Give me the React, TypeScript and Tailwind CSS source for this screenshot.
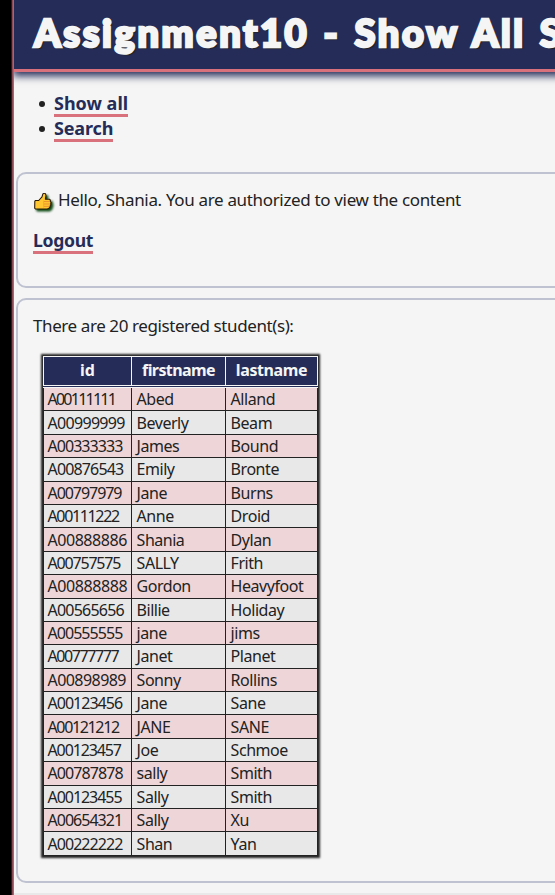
import type { ReactNode } from 'react';

type Student = [id: string, first: string, last: string];

const students: Student[] = [
  ['A00111111', 'Abed', 'Alland'],
  ['A00999999', 'Beverly', 'Beam'],
  ['A00333333', 'James', 'Bound'],
  ['A00876543', 'Emily', 'Bronte'],
  ['A00797979', 'Jane', 'Burns'],
  ['A00111222', 'Anne', 'Droid'],
  ['A00888886', 'Shania', 'Dylan'],
  ['A00757575', 'SALLY', 'Frith'],
  ['A00888888', 'Gordon', 'Heavyfoot'],
  ['A00565656', 'Billie', 'Holiday'],
  ['A00555555', 'jane', 'jims'],
  ['A00777777', 'Janet', 'Planet'],
  ['A00898989', 'Sonny', 'Rollins'],
  ['A00123456', 'Jane', 'Sane'],
  ['A00121212', 'JANE', 'SANE'],
  ['A00123457', 'Joe', 'Schmoe'],
  ['A00787878', 'sally', 'Smith'],
  ['A00123455', 'Sally', 'Smith'],
  ['A00654321', 'Sally', 'Xu'],
  ['A00222222', 'Shan', 'Yan'],
];

const narrowing: Record<string, number> = { '1': 2, '2': 0.8, '3': 0.8, '4': 0.4, '5': 0.8, '6': 0.3, '7': 1.5, '9': 0.4 };

function idTracking(id: string) {
  const total = id.split('').reduce((sum, ch) => sum + (narrowing[ch] ?? 0), 0);
  return `${(-0.42 - total / id.length).toFixed(3)}px`;
}

function NavLink({ children, className = '' }: { children: ReactNode; className?: string }) {
  return (
    <a href="#" className={`inline-block border-b-3 border-[#d9717d] font-bold text-[#252c58] ${className}`}>
      {children}
    </a>
  );
}

function NavItem({ children }: { children: ReactNode }) {
  return (
    <li className="flex h-[25px] items-start">
      <span className="mt-[10px] mr-[9px] ml-[-15px] size-[6px] rounded-full bg-[#222]" />
      {children}
    </li>
  );
}

function ThumbsUp() {
  return (
    <svg viewBox="0 0 18 19" className="h-[19px] w-[18px] shrink-0 drop-shadow-[2px_2px_1px_#0b4a12]">
      <path
        d="M.8 8.2 1.6 7.5h3.1l3.3-3.6.9-3 1-.8 1.5.7.6 1.6-.6 3.8h4l1 1-.2 1.3.9 1-.5 1.5.3 1-.9 1-.1 1.3-1 .8-1.4.9H1.4l-.7-.8Z"
        fill="#ffc832"
        stroke="#2b1a08"
        strokeWidth="1.1"
        strokeLinejoin="round"
      />
      <path d="M10 8.6h6M10 11h6.2M10 13.3h5.4" fill="none" stroke="#e8912d" strokeWidth="1" />
      <path d="M9.6 7.6v7" stroke="#f2a52c" strokeWidth="0.8" />
    </svg>
  );
}

export default function App() {
  return (
    <div className="flex h-[895px] w-[555px] overflow-hidden bg-black font-['Noto_Sans','Open_Sans',sans-serif] text-[#222]">
      <div className="w-[11px] shrink-0 bg-black" />
      <div className="w-px shrink-0 bg-[#32191f]" />
      <div className="w-px shrink-0 bg-[#8b4852]" />
      <div className="w-px shrink-0 bg-[#b7606b]" />
      <main className="flex w-[900px] shrink-0 flex-col overflow-hidden bg-[#f5f5f5]">
        <header className="h-[72px] shrink-0 border-b-3 border-[#d9717d] bg-[#252c58] pl-[20px] shadow-[0_3px_8px_1px_#252c58]">
          <h1 className="font-['Lato',sans-serif] text-[38px] leading-[65px] font-black tracking-[2.6px] whitespace-nowrap text-[#f5f5f5] [-webkit-text-stroke:2.6px_#f5f5f5] [text-shadow:2px_2px_1px_#222] [word-spacing:2.6px]">
            Assignment10 - Show All Students
          </h1>
        </header>

        <nav className="h-[100px] shrink-0 pt-[19px] pl-[40px]">
          <ul className="text-[18px] leading-[25px]">
            <NavItem><NavLink className="h-[26px]">Show all</NavLink></NavItem>
            <NavItem><NavLink className="h-[26px] tracking-[-0.15px]">Search</NavLink></NavItem>
          </ul>
        </nav>

        <section className="ml-[2px] h-[116px] shrink-0 rounded-[10px] border-2 border-[#bfc2d0] pt-[14px] pl-[15px]">
          <div className="flex h-[24px] items-center">
            <div className="mt-[5px] w-[25px] shrink-0 pl-px"><ThumbsUp /></div>
            <p className="text-[17px] tracking-[-0.34px]">Hello, Shania. You are authorized to view the content</p>
          </div>
          <div className="mt-[15px]">
            <NavLink className="h-[27px] text-[17.6px] leading-[26px] tracking-[-0.33px]">Logout</NavLink>
          </div>
        </section>

        <section className="mt-[10px] ml-[2px] h-[585px] shrink-0 rounded-[10px] border-2 border-[#bfc2d0] pt-[13px] pl-[15px]">
          <p className="text-[17px] leading-[25px] tracking-[-0.41px]">There are 20 registered student(s):</p>
          <table className="mt-[18px] ml-[10px] w-[275px] table-fixed border-separate border-spacing-0 text-[16px] leading-[20px] shadow-[0_0_2px_2px_#222]">
            <colgroup>
              <col className="w-[89px]" />
              <col className="w-[94px]" />
              <col className="w-[92px]" />
            </colgroup>
            <thead>
              <tr className="h-[30px] bg-[#252c58] text-[#f5f5f5]">
                <th className="border border-[#f5f5f5] p-0 pb-[2px]">id</th>
                <th className="border-y border-r border-[#f5f5f5] p-0 pb-[2px] tracking-[-0.6px]">firstname</th>
                <th className="border-y border-r border-[#f5f5f5] p-0 pb-[2px] tracking-[-0.4px]">lastname</th>
              </tr>
              <tr className="h-[2px] bg-[#252c58] leading-[0]">
                <td colSpan={3} className="border-b border-[#f5f5f5] p-0" />
              </tr>
            </thead>
            <tbody>
              {students.map(([id, first, last]) => (
                <tr key={id} className="h-[23.4px] odd:bg-[#eed5d7] even:bg-[#e8e8e8]">
                  <td className="border-x border-b border-[#222] p-0 pl-[3.5px]" style={{ letterSpacing: idTracking(id) }}>{id}</td>
                  <td className="border-r border-b border-[#222] p-0 pl-[4.6px] tracking-[-0.48px]">{first}</td>
                  <td className="border-r border-b border-[#222] p-0 pl-[4.6px] tracking-[-0.45px]">{last}</td>
                </tr>
              ))}
            </tbody>
          </table>
        </section>
        <div className="mt-[10px] h-[2px] bg-[#e9e9e9]" />
      </main>
    </div>
  );
}
